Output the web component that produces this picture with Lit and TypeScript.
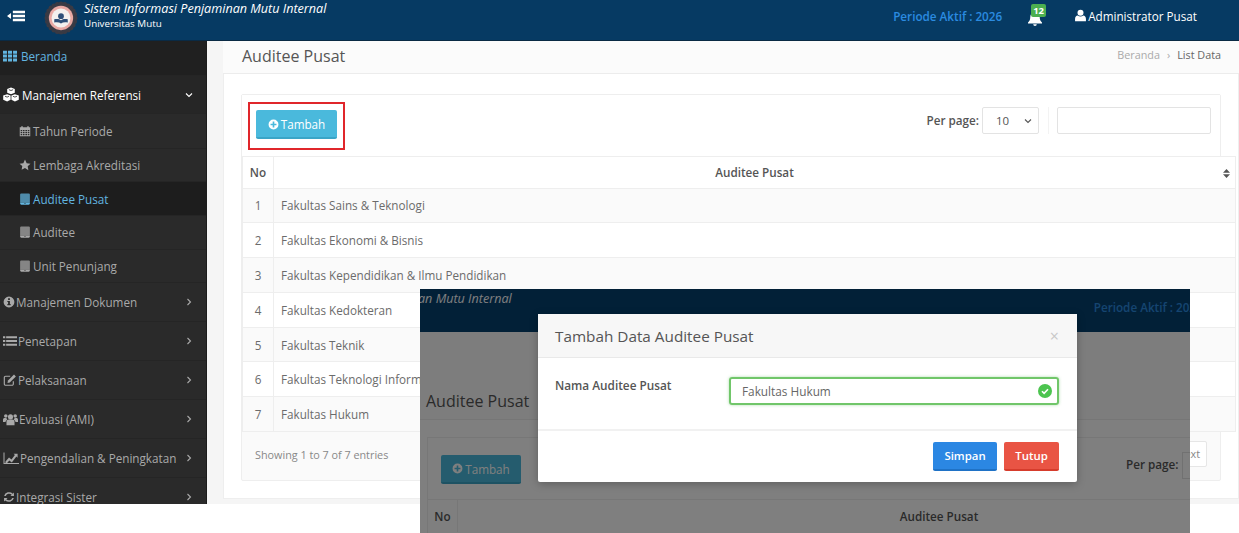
import { css, html, LitElement, svg } from 'lit'
import { customElement } from 'lit/decorators.js'

const icons: Record<string, unknown> = {
  th: svg`<path d="M0 2h4.500v3.400H0zM5.700 2h4.600v3.400H5.700zM11.500 2H16v3.400h-4.500zM0 6.400h4.500v3.400H0zM5.700 6.400h4.600v3.400H5.700zM11.500 6.400H16v3.400h-4.500zM0 10.800h4.500v3.400H0zM5.700 10.800h4.600v3.400H5.700zM11.500 10.800H16v3.400h-4.500z"/>`,
  cubes: svg`<path d="M8 .5l3.800 1.400v3.900L8 7.300 4.200 5.800V1.900zM4.100 7.200l3.500 1.300v4.300l-3.500 1.600L.2 12.800V8.600zM11.900 7.200l3.900 1.400v4.200l-3.900 1.600-3.500-1.600V8.500z"/><path d="M2 9.200l2.100.9 1.900-.9M9.900 9.200l2 .9 2.100-.9M5.900 2.700L8 3.500l2.100-.8" fill="none" stroke="#262626" stroke-width=".8"/>`,
  calendar: svg`<path fill-rule="evenodd" d="M1 3h2V1.500h2V3h6V1.500h2V3h2v12H1zM2.200 6.500V8h2V6.500zm3 0V8h2.200V6.500zm3.300 0V8h2.300V6.500zm3.300 0V8h2V6.500zM2.200 9v1.500h2V9zm3 0v1.500h2.200V9zm3.300 0v1.500h2.300V9zm3.300 0v1.500h2V9zM2.200 11.500V13.800h2v-2.300zm3 0v2.300h2.200v-2.300zm3.300 0v2.300h2.300v-2.300zm3.300 0v2.300h2v-2.300z"/>`,
  star: svg`<path d="M8 .8l2.200 4.700 5.100.7-3.700 3.600.9 5.100L8 12l-4.500 2.400.9-5.100L.7 6.200l5.100-.7z"/>`,
  tablet: svg`<path opacity=".72" d="M3 .5h10A1.500 1.500 0 0 1 14.500 2v10.500h-13V2A1.500 1.500 0 0 1 3 .5z"/><path fill-rule="evenodd" d="M1.500 12.500h13V14a1.500 1.500 0 0 1-1.500 1.500H3A1.500 1.500 0 0 1 1.500 14zM8 13.300a.7.700 0 1 0 0 1.400.7.700 0 0 0 0-1.400z"/>`,
  info: svg`<path fill-rule="evenodd" d="M8 .8a7.200 7.200 0 1 1 0 14.400A7.200 7.200 0 0 1 8 .8zM6.800 3v2.300h2.400V3zM5.800 6.500v1.400h1v2.900h-1v1.400h4.400v-1.400h-1V6.500z"/>`,
  list: svg`<path d="M0 2.500h2.600v2.300H0zM3.600 2.500H16v2.300H3.600zM0 6.800h2.600v2.300H0zM3.600 6.800H16v2.300H3.600zM0 11.100h2.600v2.300H0zM3.600 11.100H16v2.300H3.600z"/>`,
  edit: svg`<path d="M11.800 9.500v3A1.500 1.500 0 0 1 10.300 14H3a1.500 1.500 0 0 1-1.500-1.500V5.200A1.500 1.500 0 0 1 3 3.700h5.200" fill="none" stroke="currentColor" stroke-width="1.300"/><path d="M12.600 1.800l2.100 2.100-6.900 6.900-2.700.6.600-2.700z"/>`,
  users: svg`<circle cx="8" cy="5.200" r="2.700"/><circle cx="3" cy="4.300" r="1.900"/><circle cx="13" cy="4.300" r="1.900"/><path d="M3.700 14V10.500c0-1.800 1.400-2.600 2.300-2.600h4c1 0 2.300.8 2.300 2.600V14zM0 10.600V8.200c0-1 .8-1.700 1.600-1.700h2.100c.1.700.4 1.300.9 1.700-1 .4-1.800 1.300-1.900 2.400zM16 10.600V8.200c0-1-.8-1.700-1.600-1.700h-2.100c-.1.700-.4 1.300-.9 1.700 1 .4 1.800 1.300 1.900 2.400z"/>`,
  chart: svg`<path d="M.5 2.500h1V13H16v1H.5z"/><path d="M2.500 11.500l3.500-4 2.500 2 3.400-4.500-1.300-1.200h4v3.900l-1.200-1.200-4.600 6-2.500-2-2.200 2.500H2.500z"/>`,
  refresh: svg`<path d="M14.600 2v4.700H9.900l1.700-1.700A4.700 4.700 0 0 0 3.700 6.800H1.500A6.900 6.900 0 0 1 13 3.500zM1.400 14V9.300h4.700L4.400 11a4.700 4.700 0 0 0 7.900-1.800h2.200A6.900 6.900 0 0 1 3 12.500z"/>`,
  plus: svg`<path fill-rule="evenodd" d="M8 .8a7.200 7.200 0 1 1 0 14.400A7.200 7.200 0 0 1 8 .8zM6.800 3.700v3.100H3.700v2.400h3.100v3.100h2.400V9.200h3.100V6.800H9.200V3.700z"/>`,
  bell: svg`<path d="M8 .5c.6 0 1 .4 1 1v.7c2.300.4 3.700 2.300 3.700 4.600 0 3.300 1 4.500 2.300 5.700v1H1v-1c1.300-1.200 2.300-2.400 2.300-5.700C3.300 4.500 4.700 2.600 7 2.200v-.7c0-.6.400-1 1-1zM6.200 14.200h3.600A1.800 1.800 0 0 1 8 16a1.800 1.800 0 0 1-1.800-1.800z"/>`,
  user: svg`<circle cx="8" cy="4.700" r="3.700"/><path d="M1.300 15v-2.800c0-2.400 1.500-4.100 3.200-4.200 1 .8 2.200 1.200 3.500 1.200s2.500-.4 3.500-1.200c1.700.1 3.200 1.800 3.200 4.200V15z"/>`,
  toggle: svg`<path d="M0 8l3.600-2.600v5.200zM5.200 3.300H16v2.200H5.200zM5.200 6.900H16v2.200H5.200zM5.200 10.500H16v2.200H5.200z"/>`,
}

const icon = (name: string, size = 13) =>
  html`<svg class="ico" width=${size} height=${size} viewBox="0 0 16 16" fill="currentColor" aria-hidden="true">${icons[name]}</svg>`

const chevron = (open = false) =>
  html`<svg class="chev" width="8" height="8" viewBox="0 0 8 8" fill="none" stroke="currentColor" stroke-width="1.100" aria-hidden="true">
    <path d=${open ? 'M1 2.500l3 3 3-3' : 'M2.500 1l3 3-3 3'} />
  </svg>`

const scallops = Array.from({ length: 24 }, (_, i) => {
  const a = (i / 24) * Math.PI * 2
  return svg`<circle cx=${20 + Math.cos(a) * 15.5} cy=${20 + Math.sin(a) * 15.5} r="2.800" fill="#3a3a44" />`
})

const logo = html`<svg width="36" height="36" viewBox="0 0 40 40" aria-hidden="true">
  ${scallops}
  <circle cx="20" cy="20" r="16" fill="#3a3a44" />
  <circle cx="20" cy="20" r="13.500" fill="#e9a9a4" />
  <circle cx="20" cy="20" r="10.500" fill="#f3f0ee" />
  <circle cx="20" cy="18" r="3.200" fill="#2e4f78" />
  <path d="M12.500 21.500c3-1 5.500-.5 7.500 1 2-1.500 4.500-2 7.500-1v3.500c-3-.8-5.500-.4-7.500 1-2-1.400-4.500-1.800-7.500-1z" fill="#2e4f78" />
</svg>`

const rows = [
  'Fakultas Sains & Teknologi',
  'Fakultas Ekonomi & Bisnis',
  'Fakultas Kependidikan & Ilmu Pendidikan',
  'Fakultas Kedokteran',
  'Fakultas Teknik',
  'Fakultas Teknologi Informasi',
  'Fakultas Hukum',
]

const subItems = [
  { icon: 'calendar', label: 'Tahun Periode' },
  { icon: 'star', label: 'Lembaga Akreditasi' },
  { icon: 'tablet', label: 'Auditee Pusat', active: true },
  { icon: 'tablet', label: 'Auditee' },
  { icon: 'tablet', label: 'Unit Penunjang' },
]

const menuItems = [
  { icon: 'info', size: 12, label: 'Manajemen Dokumen' },
  { icon: 'list', size: 14, label: 'Penetapan' },
  { icon: 'edit', size: 14, label: 'Pelaksanaan' },
  { icon: 'users', size: 15, label: 'Evaluasi (AMI)' },
  { icon: 'chart', size: 16, label: 'Pengendalian & Peningkatan' },
  { icon: 'refresh', size: 12, label: 'Integrasi Sister' },
]

@customElement('app-root')
export class AppRoot extends LitElement {
  static styles = css`
    :host {
      display: block;
      position: relative;
      width: 1239px;
      height: 533px;
      overflow: hidden;
      background: #fff;
      font-family: 'Open Sans', 'Liberation Sans', sans-serif;
      color: #555;
    }
    * {
      box-sizing: border-box;
    }
    .ico {
      flex: none;
      display: block;
    }

    /* base page */
    .page {
      height: 504px;
      overflow: hidden;
    }
    .topbar {
      height: 41px;
      background: #063a63;
      border-bottom: 1px solid #0a2a44;
      display: flex;
      align-items: center;
      color: #fff;
    }
    .toggle {
      width: 43px;
      padding-left: 7px;
      padding-bottom: 8px;
    }
    .brand {
      display: flex;
      align-items: center;
      gap: 5px;
      padding-bottom: 4px;
    }
    .brand-text {
      padding-bottom: 6px;
    }
    .brand-title {
      font-size: 12.600px;
      font-style: italic;
      line-height: 16px;
      white-space: nowrap;
    }
    .brand-sub {
      font-size: 9.800px;
      font-weight: 500;
      line-height: 13px;
    }
    .top-right {
      margin-left: auto;
      display: flex;
      align-items: center;
      padding-bottom: 9px;
    }
    .period {
      font-size: 11.700px;
      font-weight: 600;
      color: #2b8be0;
      white-space: nowrap;
    }
    .bell {
      position: relative;
      margin-left: 25px;
      margin-top: 4px;
    }
    .badge {
      position: absolute;
      left: 4px;
      top: -6px;
      width: 15px;
      height: 13px;
      border-radius: 2px;
      background: #4caf50;
      color: #fff;
      font-size: 9.500px;
      font-weight: 700;
      line-height: 13px;
      text-align: center;
    }
    .who {
      display: flex;
      align-items: center;
      gap: 1px;
      margin-left: 31px;
      margin-right: 42px;
      font-size: 11.700px;
      white-space: nowrap;
    }

    .layout {
      display: flex;
      height: 463px;
    }
    .sidebar {
      width: 207px;
      flex: none;
      background: #2a2a2a;
      color: #a9a9a9;
      font-size: 11.700px;
      border-right: 1px solid #1c1c1c;
    }
    .item {
      display: flex;
      align-items: center;
      gap: 1px;
      padding: 0 13px 0 3px;
      white-space: nowrap;
      height: 39px;
      border-bottom: 1px solid #252525;
    }
    .item .chev {
      margin-left: auto;
      flex: none;
    }
    .item.home {
      height: 35px;
      padding-bottom: 4px;
      background: #202020;
      color: #62b5e0;
      gap: 4px;
    }
    .item.open {
      height: 38px;
      padding-top: 1px;
      background: #262626;
      color: #fff;
      gap: 3px;
    }
    .sub {
      display: flex;
      align-items: center;
      gap: 2px;
      height: 33.700px;
      padding-left: 19px;
      border-bottom: 1px solid #252525;
      white-space: nowrap;
    }
    .sub.active {
      background: #1d1d1d;
      color: #62b5e0;
    }
    .sub-wrap {
      height: 171px;
      margin-top: -1px;
      padding-top: 2px;
    }
    .rest .item:first-child {
      height: 38px;
      padding-bottom: 2px;
    }

    .main {
      flex: 1;
      min-width: 0;
      background: #f5f5f5;
      padding-left: 16px;
    }
    .crumbbar {
      height: 33px;
      background: #fbfbfb;
      border-bottom: 1px solid #ececec;
      display: flex;
      align-items: center;
      padding: 0 18px 4px 19px;
    }
    .crumbbar h1 {
      margin: 2px 0 0;
      font-size: 16px;
      font-weight: 400;
      color: #555;
    }
    .crumbs {
      margin-left: auto;
      margin-bottom: 2px;
      display: flex;
      gap: 7px;
      font-size: 10.800px;
      color: #aaa;
    }
    .crumbs b {
      font-weight: 400;
      color: #666;
    }
    .card {
      background: #fff;
      border: 1px solid #eee;
      border-top: none;
      height: 425px;
      padding: 20px 14px 0 17px;
    }
    .panel {
      width: 980px;
      height: 387px;
      border: 1px solid #eee;
      border-radius: 2px;
      background: #fafafa;
    }
    .toolbar {
      height: 60.500px;
      background: #fff;
      display: flex;
      align-items: flex-start;
    }
    .hilite {
      margin: 7px 0 0 6px;
      width: 97px;
      height: 48px;
      border: 2px solid #e0262b;
      padding: 6px;
    }
    .btn-add {
      display: flex;
      align-items: center;
      justify-content: center;
      gap: 2px;
      width: 81px;
      height: 29px;
      padding-top: 1px;
      background: #4ab9dc;
      border-bottom: 2px solid #3aa5c7;
      border-radius: 2px;
      color: #fff;
      font-size: 11.700px;
    }
    .tools {
      margin-left: auto;
      margin-right: 9px;
      margin-top: 12px;
      display: flex;
      align-items: center;
      font-size: 11.700px;
      font-weight: 600;
    }
    .tools > span {
      padding-bottom: 2px;
    }
    .select {
      display: flex;
      align-items: center;
      justify-content: space-between;
      width: 57px;
      height: 27px;
      margin-left: 3px;
      padding: 0 6px 0 13px;
      border: 1px solid #e3e3e3;
      border-radius: 2px;
      background: #fff;
      font-size: 11.500px;
      font-weight: 400;
    }
    .sep {
      width: 1px;
      height: 27px;
      background: #f3f3f3;
      margin: 0 8px 0 9px;
    }
    .search {
      width: 154px;
      height: 27px;
      border: 1px solid #e3e3e3;
      border-radius: 2px;
      background: #fff;
    }
    .grid {
      width: 994px;
      border-collapse: collapse;
      table-layout: fixed;
      font-size: 11.700px;
      background: #fff;
    }
    .grid th,
    .grid td {
      border: 1px solid #eee;
      padding: 0;
      font-weight: 400;
      color: #6b6b6b;
    }
    .grid th {
      height: 32px;
      font-weight: 600;
      color: #555;
      position: relative;
    }
    .grid td {
      height: 34.800px;
    }
    .grid td.text {
      padding-left: 7px;
    }
    .grid .no {
      width: 31px;
      text-align: center;
    }
    .grid tr.odd td {
      background: #fafafa;
    }
    .sort {
      position: absolute;
      right: 5px;
      top: 12px;
      display: block;
    }
    .foot {
      display: flex;
      align-items: center;
      padding: 9px 13px;
      font-size: 10.800px;
      color: #888;
    }
    .next {
      margin-left: auto;
      width: 40px;
      height: 26px;
      padding-right: 6px;
      line-height: 24px;
      text-align: right;
      border: 1px solid #e6e6e6;
      border-radius: 2px;
      background: #fff;
    }

    /* second screenshot, pasted over the first */
    .shot {
      position: absolute;
      left: 420px;
      top: 289px;
      width: 770px;
      height: 244px;
      overflow: hidden;
      background: #f5f5f5;
    }
    .shot-nav {
      height: 43px;
      background: #04406f;
      color: #fff;
      display: flex;
      white-space: nowrap;
    }
    .shot-nav .brand-title {
      margin-top: 2px;
      margin-left: -2px;
    }
    .shot-nav .period {
      margin-left: 582px;
      margin-top: 10px;
    }
    .shot-title {
      height: 88px;
      display: flex;
      align-items: flex-end;
      padding: 0 0 7px 6px;
      background: #fbfbfb;
      border-bottom: 1px solid #ececec;
      font-size: 16px;
    }
    .shot-card {
      height: 113px;
      background: #fff;
      padding-top: 17px;
      padding-left: 7px;
    }
    .shot-panel {
      width: 994px;
      height: 100px;
      border: 1px solid #eee;
    }
    .shot-tools {
      display: flex;
      align-items: flex-start;
      height: 61px;
      padding-left: 13px;
      padding-top: 17px;
    }
    .shot-tools .btn-add {
      width: 80px;
      padding-top: 0;
    }
    .per {
      display: flex;
      align-items: flex-start;
      margin-left: 605px;
      margin-top: -3px;
      font-size: 11.700px;
      font-weight: 600;
      line-height: 24px;
      white-space: nowrap;
    }
    .per i {
      display: block;
      width: 57px;
      height: 27px;
      margin-left: 4px;
      border: 1px solid #e3e3e3;
    }
    .shot-head {
      display: flex;
      height: 33px;
      border-top: 1px solid #eee;
      font-size: 11.700px;
      font-weight: 600;
      line-height: 33px;
    }
    .shot-head .c1 {
      width: 30px;
      text-align: center;
      border-right: 1px solid #eee;
    }
    .shot-head .c2 {
      width: 962px;
      text-align: center;
    }
    .dim {
      position: absolute;
      inset: 0;
      background: rgba(0, 0, 0, 0.5);
    }
    .modal {
      position: absolute;
      left: 118px;
      top: 25px;
      width: 539px;
      height: 168px;
      background: #fff;
      border-radius: 2px;
      box-shadow: 0 2px 8px rgba(0, 0, 0, 0.25);
    }
    .modal-head {
      height: 44px;
      display: flex;
      align-items: center;
      padding: 0 18px 0 17px;
      background: #f7f7f7;
      border-bottom: 1px solid #e9e9e9;
      font-size: 15.300px;
      color: #555;
    }
    .close {
      margin-left: auto;
      font-size: 16px;
      color: #c8c8c8;
    }
    .modal-body {
      height: 73px;
      display: flex;
      align-items: flex-start;
      padding: 19px 18px 0 17px;
      border-bottom: 2px solid #f1f1f1;
    }
    .modal-body label {
      width: 174px;
      margin-top: -1px;
      font-size: 11.800px;
      font-weight: 600;
      line-height: 18px;
      color: #555;
    }
    .input {
      flex: 1;
      height: 28px;
      display: flex;
      align-items: center;
      justify-content: space-between;
      padding: 0 5px 0 11px;
      border: 2px solid #71c66a;
      border-radius: 3px;
      font-size: 11.800px;
      color: #666;
      box-shadow: 0 0 3px rgba(90, 190, 90, 0.5);
    }
    .check {
      width: 14px;
      height: 14px;
      display: block;
    }
    .modal-foot {
      display: flex;
      justify-content: flex-end;
      gap: 7px;
      padding: 11px 18px 0;
    }
    .btn {
      height: 29px;
      border-radius: 2px;
      color: #fff;
      font-size: 11.400px;
      font-weight: 600;
      line-height: 27px;
      text-align: center;
    }
    .btn.save {
      width: 64px;
      background: #2b87e3;
      border-bottom: 2px solid #1f72c6;
    }
    .btn.shut {
      width: 55px;
      background: #e95444;
      border-bottom: 2px solid #d63c2c;
    }
  `

  render() {
    return html`
      <div class="page">
        <header class="topbar">
          <div class="toggle">${icon('toggle', 18)}</div>
          <div class="brand">
            ${logo}
            <div class="brand-text">
              <div class="brand-title">Sistem Informasi Penjaminan Mutu Internal</div>
              <div class="brand-sub">Universitas Mutu</div>
            </div>
          </div>
          <div class="top-right">
            <span class="period">Periode Aktif : 2026</span>
            <span class="bell">${icon('bell', 16)}<span class="badge">12</span></span>
            <span class="who">${icon('user', 13)}Administrator Pusat</span>
          </div>
        </header>
        <div class="layout">
          <nav class="sidebar">
            <div class="item home">${icon('th', 14)}Beranda</div>
            <div class="item open">${icon('cubes', 16)}<span>Manajemen Referensi</span>${chevron(true)}</div>
            <div class="sub-wrap">
              ${subItems.map(
                (s) => html`<div class="sub ${s.active ? 'active' : ''}">${icon(s.icon, 12)}${s.label}</div>`,
              )}
            </div>
            <div class="rest">
              ${menuItems.map((m) => html`<div class="item">${icon(m.icon, m.size)}<span>${m.label}</span>${chevron()}</div>`)}
            </div>
          </nav>
          <main class="main">
            <div class="crumbbar">
              <h1>Auditee Pusat</h1>
              <div class="crumbs"><span>Beranda</span><span>›</span><b>List Data</b></div>
            </div>
            <div class="card">
              <div class="panel">
                <div class="toolbar">
                  <div class="hilite">
                    <div class="btn-add">${icon('plus', 11)}Tambah</div>
                  </div>
                  <div class="tools">
                    <span>Per page:</span>
                    <div class="select">10 ${chevron(true)}</div>
                    <div class="sep"></div>
                    <div class="search"></div>
                  </div>
                </div>
                <table class="grid">
                  <thead>
                    <tr>
                      <th class="no">No</th>
                      <th>
                        Auditee Pusat
                        <svg class="sort" width="7" height="9" viewBox="0 0 7 9" fill="#555" aria-hidden="true">
                          <path d="M3.500 0L7 3.700H0zM3.500 9L0 5.300h7z" />
                        </svg>
                      </th>
                    </tr>
                  </thead>
                  <tbody>
                    ${rows.map(
                      (r, i) => html`<tr class=${i % 2 === 0 ? 'odd' : ''}>
                        <td class="no">${i + 1}</td>
                        <td class="text">${r}</td>
                      </tr>`,
                    )}
                  </tbody>
                </table>
                <div class="foot">
                  <span>Showing 1 to 7 of 7 entries</span>
                  <span class="next">Next</span>
                </div>
              </div>
            </div>
          </main>
        </div>
      </div>

      <section class="shot">
        <div class="shot-nav">
          <span class="brand-title">an Mutu Internal</span>
          <span class="period">Periode Aktif : 2026</span>
        </div>
        <div class="shot-title">Auditee Pusat</div>
        <div class="shot-card">
          <div class="shot-panel">
            <div class="shot-tools">
              <div class="btn-add">${icon('plus', 11)}Tambah</div>
              <div class="per">Per page:<i></i></div>
            </div>
            <div class="shot-head">
              <div class="c1">No</div>
              <div class="c2">Auditee Pusat</div>
            </div>
          </div>
        </div>
        <div class="dim"></div>
        <div class="modal">
          <div class="modal-head">Tambah Data Auditee Pusat<span class="close">×</span></div>
          <div class="modal-body">
            <label>Nama Auditee Pusat</label>
            <div class="input">
              Fakultas Hukum
              <svg class="check" viewBox="0 0 14 14" aria-hidden="true">
                <circle cx="7" cy="7" r="7" fill="#4cc44f" />
                <path d="M4 7.200l2.100 2.100L10 5.300" fill="none" stroke="#fff" stroke-width="1.600" />
              </svg>
            </div>
          </div>
          <div class="modal-foot">
            <div class="btn save">Simpan</div>
            <div class="btn shut">Tutup</div>
          </div>
        </div>
      </section>
    `
  }
}
